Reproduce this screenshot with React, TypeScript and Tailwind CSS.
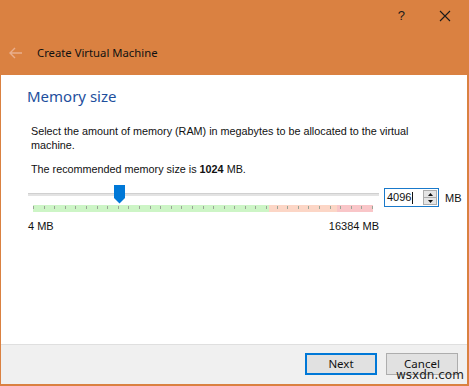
import React from "react";

const ui = { fontFamily: '"Noto Sans", "Open Sans", sans-serif' };
const body = { fontFamily: '"Liberation Sans", Arial, sans-serif' };

function ScaleBar() {
  const w = 339;
  const ticks = [];
  for (let i = 0; i <= 32; i++) {
    const x = Math.round((w * i) / 32) + 0.5;
    ticks.push(<line key={i} x1={x} y1={1} x2={x} y2={4} stroke="#9aa596" strokeWidth={1} />);
  }
  return (
    <svg width={340} height={7} className="block">
      <rect x={0} y={0} width={236} height={7} fill="#cdf5c6" />
      <rect x={236} y={0} width={68} height={7} fill="#fcd6c6" />
      <rect x={304} y={0} width={36} height={7} fill="#f9c6c8" />
      {ticks}
    </svg>
  );
}

export default function App() {
  return (
    <div className="relative w-[469px] h-[386px] bg-[#da8141] flex flex-col overflow-hidden" style={ui}>
      {/* header */}
      <div className="h-[75px] flex flex-col shrink-0">
        <div className="h-[32px] flex items-center justify-end text-[#1a1a1a]">
          <span className="text-[13px] mr-[34px]" style={{ fontFamily: '"Liberation Sans", sans-serif' }}>?</span>
          <svg width="12" height="12" viewBox="0 0 12 12" className="mr-[18px]">
            <path d="M1 1 L11 11 M11 1 L1 11" stroke="#1a1a1a" strokeWidth="1.1" />
          </svg>
        </div>
        <div className="flex items-center h-[42px] pl-[9px]">
          <svg width="14" height="12" viewBox="0 0 14 12">
            <path d="M6 1 L1 6 L6 11 M1 6 H13" stroke="#e9ae8c" strokeWidth="1.4" fill="none" />
          </svg>
          <span className="ml-[14px] text-[11.3px] text-[#111]">Create Virtual Machine</span>
        </div>
      </div>

      {/* white content */}
      <div className="flex-1 ml-[1px] mr-[2px] bg-white flex flex-col">
        <div className="flex-1 flex flex-col">
          <div className="pl-[26px] pt-[10px] text-[15px] leading-[22px] text-[#1e4f9d]">Memory size</div>
          <div className="pl-[30px] pt-[17px] pr-[40px] text-[10.8px] leading-[14px] text-[#111]" style={body}>
            Select the amount of memory (RAM) in megabytes to be allocated to the virtual machine.
          </div>
          <div className="pl-[30px] pt-[10px] text-[10.8px] leading-[14px] text-[#111]" style={body}>
            The recommended memory size is <b>1024</b> MB.
          </div>
          {/* slider row */}
          <div className="flex items-start pl-[27px] pt-[9px]">
            <div className="w-[351px] flex flex-col">
              <div className="relative h-[19px]">
                <div className="absolute left-0 right-0 top-[8px] h-[3px] bg-[#e3e3e3] border-t border-[#d0d0d0]" />
                <svg width="11" height="19" viewBox="0 0 11 19" className="absolute left-[86px] top-[0px]">
                  <path d="M0 0 H11 V13 L5.5 18.5 L0 13 Z" fill="#0078d7" />
                </svg>
              </div>
              <div className="pl-[5px] pt-[1px]">
                <ScaleBar />
              </div>
              <div className="flex justify-between text-[11px] leading-[14px] text-[#111] pt-[7px]" style={body}>
                <span>4 MB</span>
                <span>16384 MB</span>
              </div>
            </div>
            <div className="ml-[5px] mt-[3px] w-[55px] h-[19px] border border-[#1979ca] bg-white flex items-center">
              <span className="pl-[2px] text-[11px] text-[#111] flex-1" style={body}>
                4096<span className="inline-block w-[1px] h-[12px] bg-[#111] align-middle ml-[1px]" />
              </span>
              <div className="w-[14px] h-[15px] mr-[1px] flex flex-col border border-[#adadad] bg-[#e5e5e5]">
                <div className="flex-1 flex items-center justify-center border-b border-[#adadad]">
                  <svg width="5" height="3" viewBox="0 0 5 3"><path d="M0 3 L2.5 0 L5 3 Z" fill="#111" /></svg>
                </div>
                <div className="flex-1 flex items-center justify-center">
                  <svg width="5" height="3" viewBox="0 0 5 3"><path d="M0 0 L2.5 3 L5 0 Z" fill="#111" /></svg>
                </div>
              </div>
            </div>
            <span className="ml-[6px] mt-[5px] text-[11px] text-[#111]" style={body}>MB</span>
          </div>
        </div>

        {/* footer */}
        <div className="h-[40px] bg-[#f0f0f0] border-t border-[#dfdfdf] flex items-start justify-end pt-[8px] pr-[9px] gap-[9px]">
          <button className="w-[72px] h-[22px] bg-[#e1e1e1] border-2 border-[#0078d7] text-[11.5px] text-[#111] flex items-center justify-center" style={ui}>
            Next
          </button>
          <button className="w-[72px] h-[22px] bg-[#e1e1e1] border border-[#adadad] text-[11.5px] text-[#111] flex items-start pt-[1px] justify-center" style={ui}>
            Cancel
          </button>
        </div>
      </div>
      <div className="h-[2px] shrink-0" />

      <span className="absolute left-[396px] top-[369px] text-[12px] leading-[13px] text-[#222]" style={{ fontFamily: '"DejaVu Sans", sans-serif' }}>
        wsxdn.com
      </span>
    </div>
  );
}
